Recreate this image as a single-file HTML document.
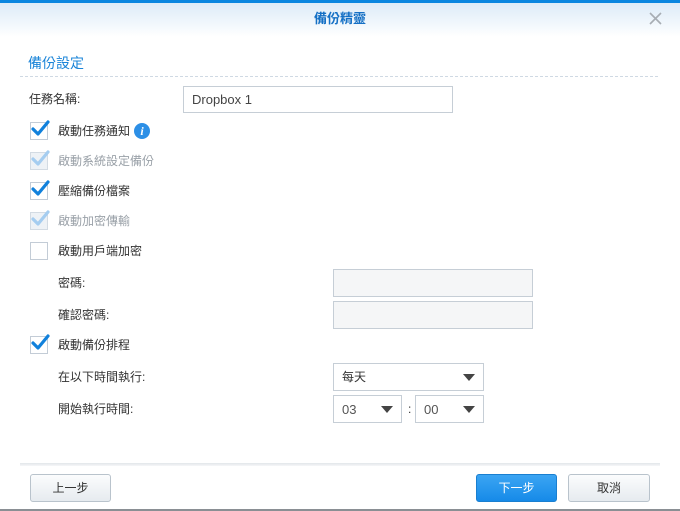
<!DOCTYPE html>
<html><head><meta charset="utf-8"><style>
*{margin:0;padding:0;box-sizing:border-box}
body{width:680px;height:511px;overflow:hidden;background:#fff;font-family:"Liberation Sans","Noto Sans CJK TC",sans-serif;font-size:12px;color:#333;position:relative}
.a{position:absolute}
.top{left:0;top:0;width:680px;height:3px;background:#0a86e0}
.hdr{left:0;top:3px;width:680px;height:34px;background:linear-gradient(#dcebf8,#fff)}
.t{line-height:16px;white-space:nowrap}
.cb{width:18px;height:18px;border:1px solid #c3ccd6;background:#fff}
.cb.d{background:#eef2f6;border-color:#d3dbe3}
.inp{border:1px solid #c6ced6;background:#f5f6f7}
.sel{border:1px solid #c6ced6;background:#fff}
.tri{width:0;height:0;border-left:6px solid transparent;border-right:6px solid transparent;border-top:7px solid #444}
.btn{height:28px;border:1px solid #b9c3cc;border-radius:3px;background:linear-gradient(#fbfcfd,#e6ebef);text-align:center;line-height:26px;font-size:12px;color:#333}
</style></head><body>
<div class="a top"></div><div class="a hdr"></div>
<div class="a t" style="left:0;width:680px;text-align:center;top:11px;font-size:13px;font-weight:bold;color:#1570c5">備份精靈</div>
<svg class="a" style="left:649px;top:12px" width="13" height="13"><path d="M1 1L12 12M12 1L1 12" stroke="#a7adb3" stroke-width="1.6"/></svg>
<div class="a t" style="left:28px;top:55px;font-size:14px;color:#1a84d8">備份設定</div>
<div class="a" style="left:20px;top:76px;width:638px;border-top:1px dashed #cfd9e3"></div>
<div class="a t" style="left:29px;top:91px">任務名稱:</div>
<div class="a inp" style="left:183px;top:86px;width:270px;height:27px;background:#fff"></div>
<div class="a t" style="left:192px;top:92px;font-size:13px;color:#444">Dropbox 1</div>

<svg width="0" height="0" style="position:absolute"><defs><path id="ck" d="M3 10L8 15L18 3" fill="none" stroke-width="3.2" stroke-linecap="round" stroke-linejoin="round"/></defs></svg>
<div class="a cb" style="left:30px;top:122px"></div><svg class="a" style="left:30px;top:119px" width="20" height="20"><use href="#ck" stroke="#1181dc"/></svg>
<div class="a t" style="left:58px;top:123px">啟動任務通知</div>
<div class="a" style="left:134px;top:123px;width:16px;height:16px;border-radius:50%;background:#2c8fe6;color:#fff;font:bold italic 12px 'Liberation Serif',serif;text-align:center;line-height:16px">i</div>

<div class="a cb d" style="left:30px;top:152px"></div><svg class="a" style="left:30px;top:149px" width="20" height="20"><use href="#ck" stroke="#a5cdf0"/></svg>
<div class="a t" style="left:58px;top:153px;color:#9aa1a8">啟動系統設定備份</div>

<div class="a cb" style="left:30px;top:182px"></div><svg class="a" style="left:30px;top:179px" width="20" height="20"><use href="#ck" stroke="#1181dc"/></svg>
<div class="a t" style="left:58px;top:183px">壓縮備份檔案</div>

<div class="a cb d" style="left:30px;top:212px"></div><svg class="a" style="left:30px;top:209px" width="20" height="20"><use href="#ck" stroke="#a5cdf0"/></svg>
<div class="a t" style="left:58px;top:213px;color:#9aa1a8">啟動加密傳輸</div>

<div class="a cb" style="left:30px;top:242px"></div>
<div class="a t" style="left:58px;top:243px">啟動用戶端加密</div>

<div class="a t" style="left:58px;top:275px">密碼:</div>
<div class="a inp" style="left:333px;top:269px;width:200px;height:28px"></div>
<div class="a t" style="left:58px;top:307px">確認密碼:</div>
<div class="a inp" style="left:333px;top:301px;width:200px;height:28px"></div>

<div class="a cb" style="left:30px;top:336px"></div><svg class="a" style="left:30px;top:333px" width="20" height="20"><use href="#ck" stroke="#1181dc"/></svg>
<div class="a t" style="left:58px;top:337px">啟動備份排程</div>

<div class="a t" style="left:58px;top:369px">在以下時間執行:</div>
<div class="a sel" style="left:333px;top:363px;width:151px;height:28px"></div>
<div class="a t" style="left:342px;top:369px">每天</div>
<div class="a tri" style="left:463px;top:374px"></div>

<div class="a t" style="left:58px;top:401px">開始執行時間:</div>
<div class="a sel" style="left:333px;top:395px;width:69px;height:28px"></div>
<div class="a t" style="left:342px;top:402px;font-size:13px;color:#555">03</div>
<div class="a tri" style="left:381px;top:406px"></div>
<div class="a t" style="left:408px;top:401px">:</div>
<div class="a sel" style="left:415px;top:395px;width:69px;height:28px"></div>
<div class="a t" style="left:424px;top:402px;font-size:13px;color:#555">00</div>
<div class="a tri" style="left:463px;top:406px"></div>

<div class="a" style="left:20px;top:463px;width:640px;height:3px;background:linear-gradient(#e2e6ea,#f6f7f8)"></div>
<div class="a btn" style="left:30px;top:474px;width:81px">上一步</div>
<div class="a btn" style="left:476px;top:474px;width:81px;background:linear-gradient(#3ba5f3,#168ae8);border-color:#1a7fd0;color:#fff">下一步</div>
<div class="a btn" style="left:568px;top:474px;width:82px">取消</div>
<div class="a" style="left:0;top:509px;width:680px;height:2px;background:#8a8f94"></div>
</body></html>
